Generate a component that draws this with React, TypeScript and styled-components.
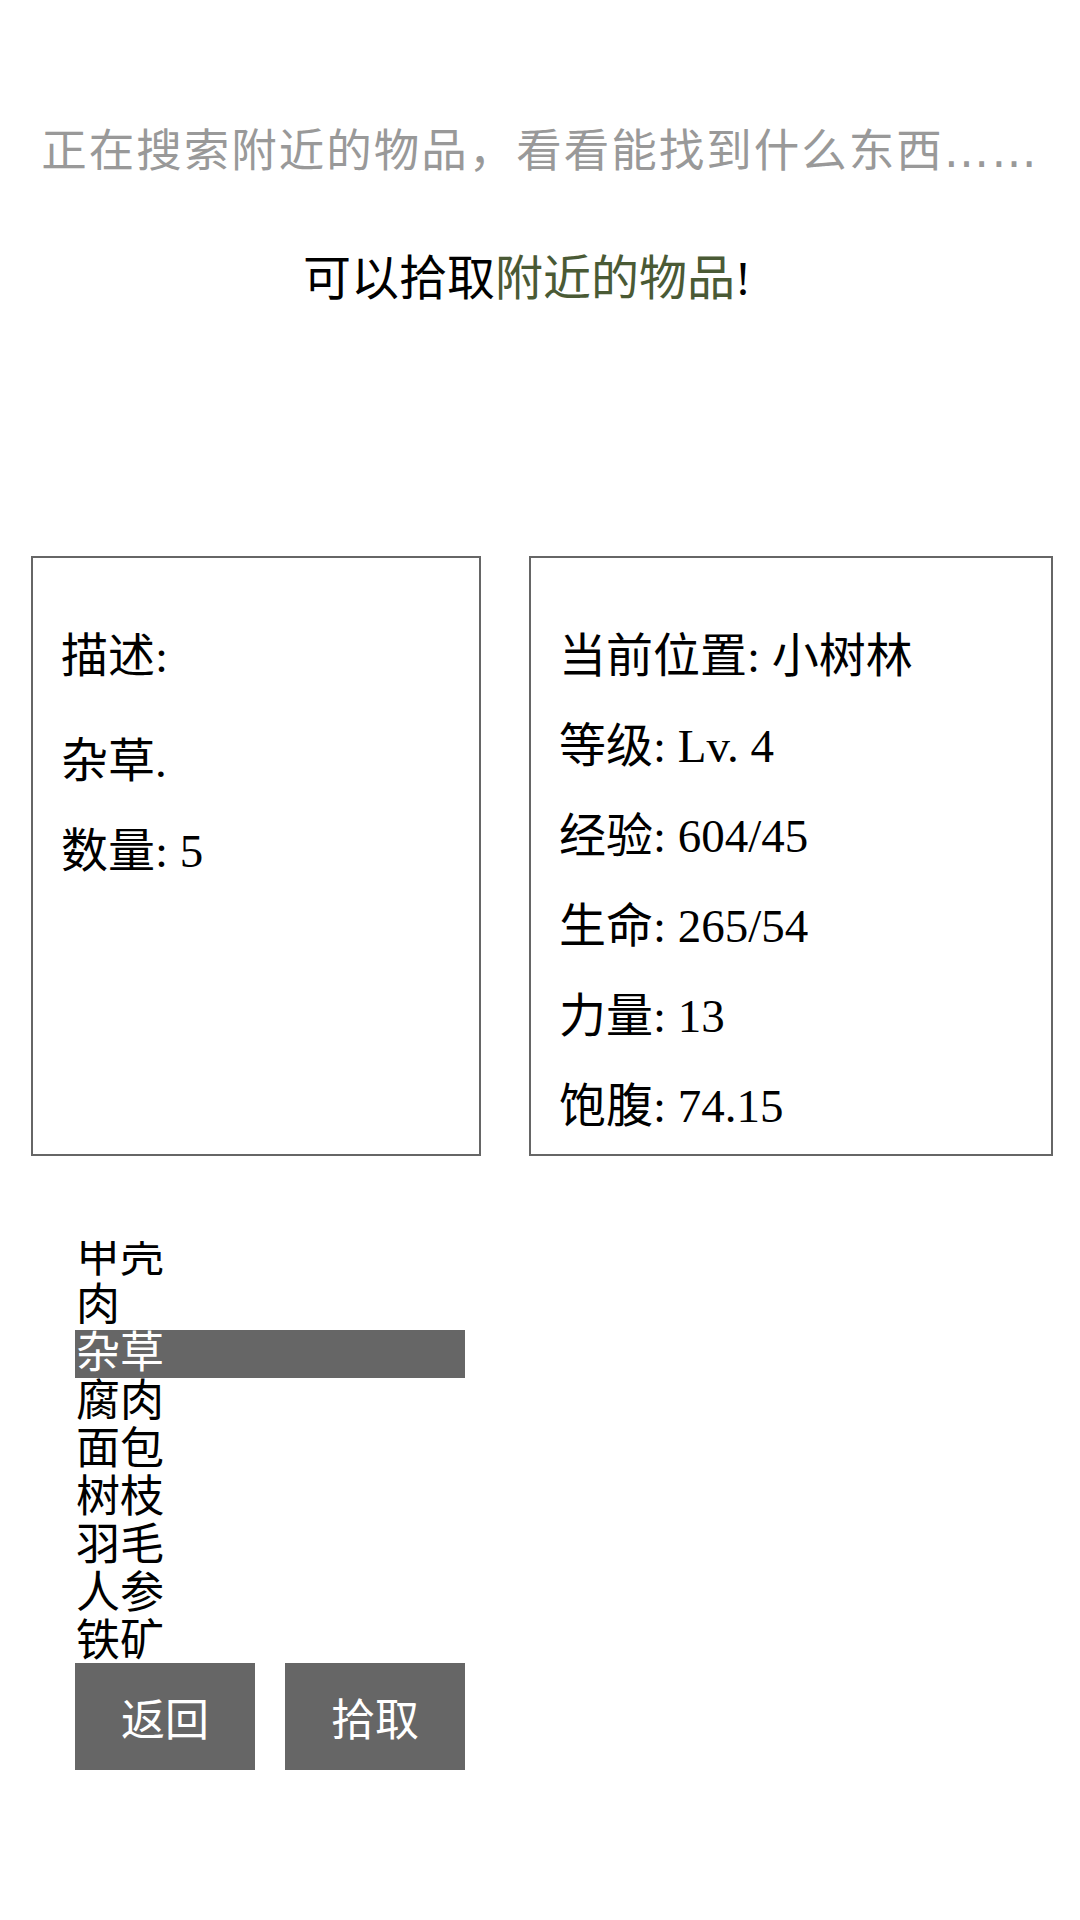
import { useLayoutEffect, useRef, useState } from "react";
import styled, { createGlobalStyle } from "styled-components";

const GlobalStyle = createGlobalStyle`
  html, body {
    margin: 0;
    padding: 0;
    background: #fff;
  }
  body {
    font-family: "Liberation Serif", "Noto Sans CJK SC", serif;
    color: #000;
  }
`;

const items = ["甲壳", "肉", "杂草", "腐肉", "面包", "树枝", "羽毛", "人参", "铁矿"];

const stats = [
  "当前位置: 小树林",
  "等级: Lv. 4",
  "经验: 604/45",
  "生命: 265/54",
  "力量: 13",
  "饱腹: 74.15",
];

const App = () => {
  const [selected, setSelected] = useState(2);
  const listRef = useRef<HTMLDivElement>(null);

  useLayoutEffect(() => {
    if (listRef.current) listRef.current.scrollTop = 7;
  }, []);

  return (
    <Page>
      <GlobalStyle />
      <Notice>
        正在搜索附近的物品，看看能找到什么东西<Ellipsis>……</Ellipsis>
      </Notice>
      <Prompt>
        可以拾取<Highlight>附近的物品</Highlight>!
      </Prompt>

      <Panels>
        <Panel width={450}>
          <Line>描述:</Line>
          <Line gap={15}>{items[selected]}.</Line>
          <Line>数量: 5</Line>
        </Panel>
        <Panel width={524}>
          {stats.map((s) => (
            <Line key={s}>{s}</Line>
          ))}
        </Panel>
      </Panels>

      <ItemList ref={listRef}>
        {items.map((name, i) => (
          <Item key={name} active={i === selected} onClick={() => setSelected(i)}>
            {name}
          </Item>
        ))}
      </ItemList>

      <Actions>
        <Button>返回</Button>
        <Button>拾取</Button>
      </Actions>
    </Page>
  );
};

export default App;

const Page = styled.div`
  width: 1080px;
  min-height: 1920px;
  padding-top: 122px;
  box-sizing: border-box;
`;

const Notice = styled.div`
  height: 60px;
  text-align: center;
  font-size: 45.5px;
  line-height: 60px;
  letter-spacing: 2px;
  color: #999;
  white-space: nowrap;
`;

const Ellipsis = styled.span`
  font-family: "DejaVu Sans", sans-serif;
`;

const Prompt = styled.div`
  height: 60px;
  margin-top: 67px;
  padding-right: 26px;
  text-align: center;
  font-size: 48px;
  line-height: 60px;
  color: #000;
  white-space: nowrap;
`;

const Highlight = styled.span`
  color: #4a5a35;
`;

const Panels = styled.div`
  display: flex;
  gap: 48px;
  margin-top: 247px;
  padding-left: 31px;
`;

const Panel = styled.div<{ width: number }>`
  width: ${(p) => p.width}px;
  height: 600px;
  box-sizing: border-box;
  border: 2px solid #666;
  padding: 53px 0 0 28px;
`;

const Line = styled.div<{ gap?: number }>`
  height: 90px;
  font-size: 47px;
  line-height: 90px;
  margin-top: ${(p) => p.gap ?? 0}px;
  white-space: nowrap;
`;

const ItemList = styled.div`
  width: 390px;
  height: 422px;
  margin: 85px 0 0 75px;
  overflow-y: auto;
  scrollbar-width: none;
  &::-webkit-scrollbar {
    display: none;
  }
`;

const Item = styled.div<{ active: boolean }>`
  height: 48px;
  line-height: 48px;
  font-size: 44px;
  padding-left: 1px;
  background: ${(p) => (p.active ? "#666" : "transparent")};
  color: ${(p) => (p.active ? "#fff" : "#000")};
  cursor: pointer;
`;

const Actions = styled.div`
  display: flex;
  gap: 30px;
  margin-left: 75px;
`;

const Button = styled.button`
  width: 180px;
  height: 107px;
  border: none;
  background: #666;
  color: #fff;
  font-family: inherit;
  font-size: 44px;
  padding: 0;
  cursor: pointer;
`;
